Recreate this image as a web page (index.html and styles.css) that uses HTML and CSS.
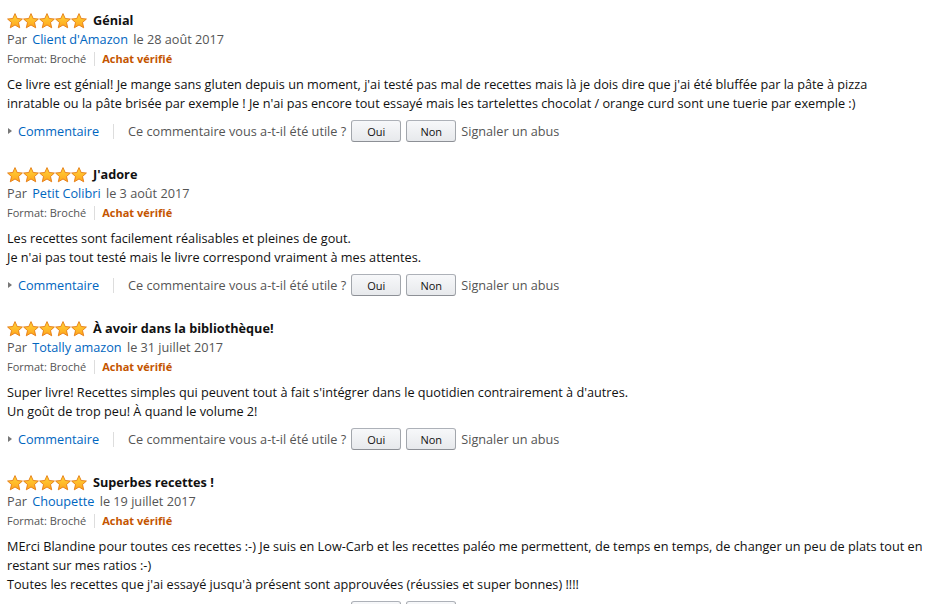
FILE: index.html
```html
<!DOCTYPE html>
<html lang="fr">
<head>
    <meta charset="UTF-8">
    <title>Commentaires clients</title>
    <link rel="stylesheet" href="styles.css">
</head>
<body>
<svg width="0" height="0" class="defs">
    <defs>
        <linearGradient id="starFill" x1="0" y1="0" x2="0" y2="1">
            <stop offset="0" stop-color="#ffd53a"/>
            <stop offset="1" stop-color="#ffa41c"/>
        </linearGradient>
        <symbol id="star" viewBox="0 0 16 16">
            <polygon points="8,0.6 10.2,5.5 15.4,6 11.5,9.5 12.7,14.8 8,12 3.3,14.8 4.5,9.5 0.6,6 5.8,5.5" fill="url(#starFill)" stroke="#e47911" stroke-width="0.9" stroke-linejoin="round"/>
        </symbol>
    </defs>
</svg>

<div class="review">
    <div class="review-head">
        <span class="stars"><svg><use href="#star"/></svg><svg><use href="#star"/></svg><svg><use href="#star"/></svg><svg><use href="#star"/></svg><svg><use href="#star"/></svg></span>
        <span class="review-title">Génial</span>
    </div>
    <div class="byline">Par <a href="#">Client d'Amazon</a> le 28 août 2017</div>
    <div class="format">Format: Broché <span class="sep"></span> <span class="verified">Achat vérifié</span></div>
    <div class="review-body">Ce livre est génial! Je mange sans gluten depuis un moment, j'ai testé pas mal de recettes mais là je dois dire que j'ai été bluffée par la pâte à pizza<br>inratable ou la pâte brisée par exemple ! Je n'ai pas encore tout essayé mais les tartelettes chocolat / orange curd sont une tuerie par exemple :)</div>
    <div class="actions">
        <span class="arrow"></span><a href="#">Commentaire</a>
        <span class="sep tall"></span>
        <span>Ce commentaire vous a-t-il été utile ?</span>
        <button>Oui</button><button>Non</button>
        <span class="muted">Signaler un abus</span>
    </div>
</div>

<div class="review">
    <div class="review-head">
        <span class="stars"><svg><use href="#star"/></svg><svg><use href="#star"/></svg><svg><use href="#star"/></svg><svg><use href="#star"/></svg><svg><use href="#star"/></svg></span>
        <span class="review-title">J'adore</span>
    </div>
    <div class="byline">Par <a href="#">Petit Colibri</a> le 3 août 2017</div>
    <div class="format">Format: Broché <span class="sep"></span> <span class="verified">Achat vérifié</span></div>
    <div class="review-body">Les recettes sont facilement réalisables et pleines de gout.<br>Je n'ai pas tout testé mais le livre correspond vraiment à mes attentes.</div>
    <div class="actions">
        <span class="arrow"></span><a href="#">Commentaire</a>
        <span class="sep tall"></span>
        <span>Ce commentaire vous a-t-il été utile ?</span>
        <button>Oui</button><button>Non</button>
        <span class="muted">Signaler un abus</span>
    </div>
</div>

<div class="review">
    <div class="review-head">
        <span class="stars"><svg><use href="#star"/></svg><svg><use href="#star"/></svg><svg><use href="#star"/></svg><svg><use href="#star"/></svg><svg><use href="#star"/></svg></span>
        <span class="review-title">À avoir dans la bibliothèque!</span>
    </div>
    <div class="byline">Par <a href="#">Totally amazon</a> le 31 juillet 2017</div>
    <div class="format">Format: Broché <span class="sep"></span> <span class="verified">Achat vérifié</span></div>
    <div class="review-body">Super livre! Recettes simples qui peuvent tout à fait s'intégrer dans le quotidien contrairement à d'autres.<br>Un goût de trop peu! À quand le volume 2!</div>
    <div class="actions">
        <span class="arrow"></span><a href="#">Commentaire</a>
        <span class="sep tall"></span>
        <span>Ce commentaire vous a-t-il été utile ?</span>
        <button>Oui</button><button>Non</button>
        <span class="muted">Signaler un abus</span>
    </div>
</div>

<div class="review">
    <div class="review-head">
        <span class="stars"><svg><use href="#star"/></svg><svg><use href="#star"/></svg><svg><use href="#star"/></svg><svg><use href="#star"/></svg><svg><use href="#star"/></svg></span>
        <span class="review-title">Superbes recettes !</span>
    </div>
    <div class="byline">Par <a href="#">Choupette</a> le 19 juillet 2017</div>
    <div class="format">Format: Broché <span class="sep"></span> <span class="verified">Achat vérifié</span></div>
    <div class="review-body">MErci Blandine pour toutes ces recettes :-) Je suis en Low-Carb et les recettes paléo me permettent, de temps en temps, de changer un peu de plats tout en restant sur mes ratios :-)<br>Toutes les recettes que j'ai essayé jusqu'à présent sont approuvées (réussies et super bonnes) !!!!</div>
    <div class="actions">
        <span class="arrow"></span><a href="#">Commentaire</a>
        <span class="sep tall"></span>
        <span>Ce commentaire vous a-t-il été utile ?</span>
        <button>Oui</button><button>Non</button>
        <span class="muted">Signaler un abus</span>
    </div>
</div>
</body>
</html>
```

FILE: styles.css
```css
body {
    margin: 0;
    padding: 11px 7px 0 7px;
    font-family: "Open Sans", "Liberation Sans", sans-serif;
    font-size: 12.7px;
    line-height: 19px;
    color: #111;
    background: #fff;
}
.defs {
    position: absolute;
}
a {
    color: #0066c0;
    text-decoration: none;
}
.review {
    margin-bottom: 22px;
}
.review-head {
    display: flex;
    align-items: center;
    gap: 6px;
}
.stars {
    display: flex;
    height: 19px;
    align-items: center;
}
.stars svg {
    width: 16px;
    height: 16px;
}
.review-title {
    font-weight: bold;
}
.byline {
    color: #555;
}
.byline a {
    margin: 0 2px;
}
.format {
    font-size: 11px;
    color: #555;
    display: flex;
    align-items: center;
    gap: 4px;
}
.sep {
    display: inline-block;
    width: 1px;
    height: 14px;
    background: #ddd;
    margin: 0 3px 0 4px;
}
.verified {
    font-weight: bold;
    color: #c45500;
}
.review-body {
    margin-top: 7px;
}
.actions {
    margin-top: 6px;
    display: flex;
    align-items: center;
    height: 24px;
    color: #555;
}
.arrow {
    width: 0;
    height: 0;
    border-left: 4px solid #777;
    border-top: 3px solid transparent;
    border-bottom: 3px solid transparent;
    margin: 0 6px 0 1px;
}
.sep.tall {
    height: 15px;
    margin: 0 14px;
}
.actions button {
    width: 50px;
    height: 22px;
    margin-left: 5px;
    padding: 0;
    font-family: inherit;
    font-size: 11px;
    color: #111;
    border: 1px solid #adb1b8;
    border-color: #adb1b8 #a2a6ac #8d9096;
    border-radius: 3px;
    background: linear-gradient(to bottom, #f7f8fa, #e7e9ec);
}
.actions .muted {
    margin-left: 5px;
}
```
